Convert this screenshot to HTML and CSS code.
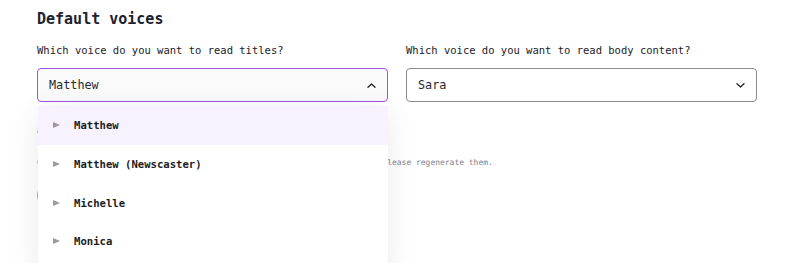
FILE: index.html
```html
<!DOCTYPE html>
<html lang="en">
<head>
    <meta charset="UTF-8">
    <meta name="viewport" content="width=device-width, initial-scale=1.0">
    <title>Default voices</title>
    <link rel="stylesheet" href="styles.css">
</head>
<body>
    <div class="settings">
        <h2>Default voices</h2>
        <div class="voice-row">
            <div class="field">
                <label>Which voice do you want to read titles?</label>
                <div class="select open">
                    <span>Matthew</span>
                    <svg class="chevron" width="9" height="5" viewBox="0 0 9 5"><path d="M1 4.2 4.5 1 8 4.2" fill="none" stroke="#222" stroke-width="1.3" stroke-linecap="round" stroke-linejoin="round"/></svg>
                </div>
                <ul class="menu">
                    <li class="active"><span class="play"></span>Matthew</li>
                    <li><span class="play"></span>Matthew (Newscaster)</li>
                    <li><span class="play"></span>Michelle</li>
                    <li><span class="play"></span>Monica</li>
                </ul>
            </div>
            <div class="field">
                <label>Which voice do you want to read body content?</label>
                <div class="select">
                    <span>Sara</span>
                    <svg class="chevron" width="9" height="5" viewBox="0 0 9 5"><path d="M1 0.8 4.5 4 8 0.8" fill="none" stroke="#222" stroke-width="1.3" stroke-linecap="round" stroke-linejoin="round"/></svg>
                </div>
            </div>
        </div>
        <p class="sub">Audio voices</p>
        <p class="note">Changes will only apply to new audios. If you want to update old files, please regenerate them.</p>
        <button class="btn">(Regenerate)</button>
    </div>
</body>
</html>
```

FILE: styles.css
```css
html,
body {
    height: 263px;
}
body {
    margin: 0;
    background: #ffffff;
    font-family: "DejaVu Sans Mono", "Liberation Mono", monospace;
    color: #1f2430;
    overflow: hidden;
}
.settings {
    padding: 9px 38px 0 37px;
}
h2 {
    margin: 0 0 14px;
    font-size: 15px;
    line-height: 20px;
    font-weight: bold;
    color: #1c2230;
}
.voice-row {
    display: grid;
    grid-template-columns: 351px 351px;
    gap: 18px;
}
.field {
    position: relative;
}
label {
    display: block;
    font-size: 10.5px;
    line-height: 14px;
    color: #1b1b1f;
    margin-bottom: 11px;
}
.select {
    display: flex;
    align-items: center;
    justify-content: space-between;
    height: 34px;
    box-sizing: border-box;
    padding: 0 11px 0 11px;
    border: 1px solid #8c8c8c;
    border-radius: 4px;
    background: #ffffff;
    font-size: 11.8px;
    color: #2a2a30;
}
.select.open {
    border-color: #9d52ea;
    background: #fafafa;
}
.menu {
    position: absolute;
    top: 63px;
    left: 1px;
    right: 0;
    margin: 0;
    padding: 0 0 12px;
    list-style: none;
    background: #ffffff;
    box-shadow: 0 6px 28px rgba(0, 0, 0, 0.09);
    z-index: 2;
}
.menu li {
    display: flex;
    align-items: center;
    height: 38.7px;
    padding-left: 15px;
    font-size: 10.6px;
    font-weight: bold;
    color: #1d1d22;
}
.menu li.active {
    background: #f8f2fe;
}
.play {
    width: 0;
    height: 0;
    border-top: 3.5px solid transparent;
    border-bottom: 3.5px solid transparent;
    border-left: 7px solid #9a9a9e;
    margin-right: 14px;
}
.sub {
    margin: 24px 0 0;
    font-size: 8px;
    color: #888a92;
}
.note {
    margin: 22px 0 0;
    font-size: 7.97px;
    line-height: 12px;
    color: #7d808a;
    white-space: nowrap;
}
.btn {
    margin-top: 14px;
    font-family: inherit;
    font-size: 11px;
    background: #ffffff;
    border: 1px solid #999;
    border-radius: 14px;
    padding: 5px 12px;
}
```
